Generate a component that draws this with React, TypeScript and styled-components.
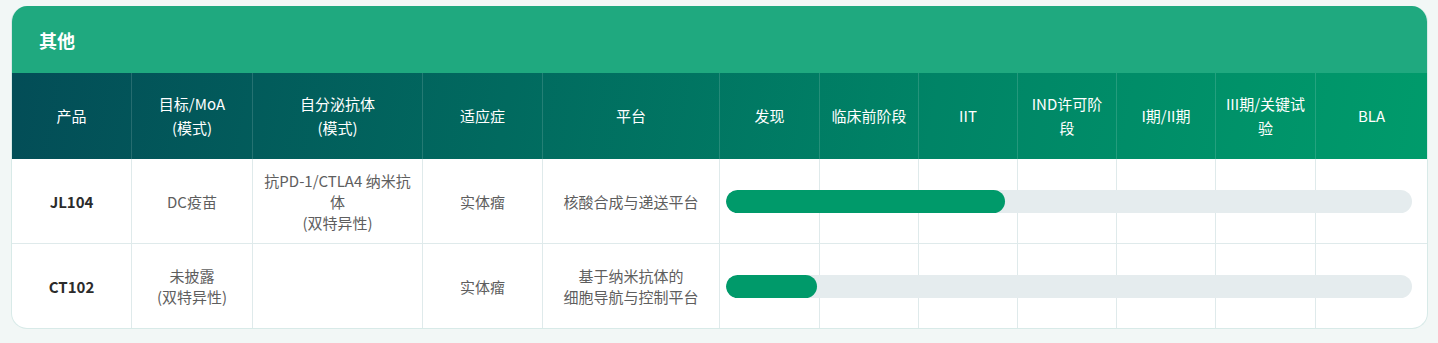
import React from 'react';
import styled, { createGlobalStyle } from 'styled-components';

const GlobalStyle = createGlobalStyle`
  html, body {
    margin: 0;
    padding: 0;
    background: #f2f7f6;
  }
  body {
    font-family: "Noto Sans CJK SC", "Noto Sans", sans-serif;
    -webkit-font-smoothing: antialiased;
  }
`;

const COLUMNS = '120px 121px 170px 120px 177px 100px 99px 99px 99px 99px 100px 1fr';

const Page = styled.div`
  padding: 6px 10px 14px 11px;
`;

const Card = styled.section`
  width: 1417px;
  box-sizing: border-box;
  background: #fff;
  border: 1px solid #d8eae8;
  border-top: none;
  border-radius: 16px;
  overflow: hidden;
`;

const TitleBar = styled.div`
  height: 67px;
  display: flex;
  align-items: center;
  padding-left: 27px;
  background: #1fa97f;
  color: #fff;
  font-size: 18px;
  font-weight: 700;
`;

const HeaderRow = styled.div`
  display: grid;
  grid-template-columns: ${COLUMNS};
  height: 86px;
  background: linear-gradient(100deg, #034d57 0%, #016a5f 35%, #008466 65%, #009b6b 100%);
`;

const HeadCell = styled.div`
  display: flex;
  align-items: center;
  justify-content: center;
  text-align: center;
  white-space: nowrap;
  color: #fff;
  font-size: 15px;
  font-weight: 400;
  line-height: 24px;
  border-right: 1px solid rgba(255, 255, 255, 0.14);
  &:last-child {
    border-right: none;
  }
`;

const BodyRow = styled.div<{ $height: number }>`
  display: grid;
  grid-template-columns: ${COLUMNS};
  grid-template-rows: ${p => p.$height}px;
  border-bottom: 1px solid #dfeaeb;
  &:last-child {
    border-bottom: none;
  }
`;

const Cell = styled.div<{ $col: number; $bold?: boolean }>`
  grid-row: 1;
  grid-column: ${p => p.$col};
  display: flex;
  align-items: center;
  justify-content: center;
  text-align: center;
  white-space: nowrap;
  font-size: 15px;
  font-weight: ${p => (p.$bold ? 700 : 400)};
  color: ${p => (p.$bold ? '#2b2b2b' : '#5e5e5e')};
  line-height: 21px;
  border-right: ${p => (p.$col === 12 ? 'none' : '1px solid #dfeaeb')};
`;

const Track = styled.div`
  grid-row: 1;
  grid-column: 6 / 13;
  align-self: center;
  margin: 0 15px 0 6px;
  height: 23px;
  border-radius: 12px;
  background: #e5ecee;
  overflow: hidden;
  z-index: 1;
`;

const Fill = styled.div`
  height: 100%;
  border-radius: 12px;
  background: #009a6a;
`;

const headers: React.ReactNode[] = [
  '产品',
  <>目标/MoA<br />(模式)</>,
  <>自分泌抗体<br />(模式)</>,
  '适应症',
  '平台',
  '发现',
  '临床前阶段',
  'IIT',
  <>IND许可阶<br />段</>,
  'I期/II期',
  <>III期/关键试<br />验</>,
  'BLA',
];

interface Product {
  name: string;
  target: React.ReactNode;
  antibody: React.ReactNode;
  indication: string;
  platform: React.ReactNode;
  progress: number;
  height: number;
}

const products: Product[] = [
  {
    name: 'JL104',
    target: 'DC疫苗',
    antibody: <>抗PD-1/CTLA4 纳米抗<br />体<br />(双特异性)</>,
    indication: '实体瘤',
    platform: '核酸合成与递送平台',
    progress: 40.7,
    height: 84,
  },
  {
    name: 'CT102',
    target: <>未披露<br />(双特异性)</>,
    antibody: '',
    indication: '实体瘤',
    platform: <>基于纳米抗体的<br />细胞导航与控制平台</>,
    progress: 13.2,
    height: 84,
  },
];

const stageCols = [6, 7, 8, 9, 10, 11, 12];

export default function App() {
  return (
    <>
      <GlobalStyle />
      <Page>
        <Card>
          <TitleBar>其他</TitleBar>
          <HeaderRow>
            {headers.map((h, i) => (
              <HeadCell key={i}>{h}</HeadCell>
            ))}
          </HeaderRow>
          {products.map(p => (
            <BodyRow key={p.name} $height={p.height}>
              <Cell $col={1} $bold>{p.name}</Cell>
              <Cell $col={2}>{p.target}</Cell>
              <Cell $col={3}>{p.antibody}</Cell>
              <Cell $col={4}>{p.indication}</Cell>
              <Cell $col={5}>{p.platform}</Cell>
              {stageCols.map(c => (
                <Cell key={c} $col={c} />
              ))}
              <Track>
                <Fill style={{ width: `${p.progress}%` }} />
              </Track>
            </BodyRow>
          ))}
        </Card>
      </Page>
    </>
  );
}
